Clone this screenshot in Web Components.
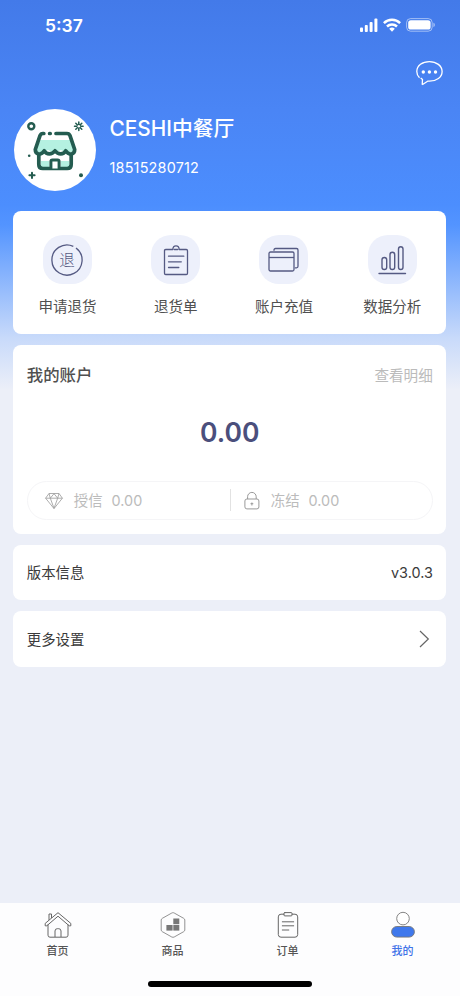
<!DOCTYPE html>
<html lang="zh-CN">
<head>
<meta charset="utf-8">
<meta name="viewport" content="width=device-width, initial-scale=1">
<title>我的</title>
<style>
  body {
    margin: 0;
    font-family: Inter, "Noto Sans CJK SC", sans-serif;
    color: #3a3a3a;
    background: #eceff8;
  }
</style>
</head>
<body>
<mine-page>
  <status-bar slot="header" time="5:37"></status-bar>
  <user-header slot="header" name="CESHI中餐厅" phone="18515280712"></user-header>

  <panel-card>
    <action-grid>
      <action-item icon="refund" label="申请退货"></action-item>
      <action-item icon="clipboard" label="退货单"></action-item>
      <action-item icon="cards" label="账户充值"></action-item>
      <action-item icon="chart" label="数据分析"></action-item>
    </action-grid>
  </panel-card>
  <panel-card>
    <account-summary balance="0.00">
      <account-stat icon="gem" label="授信" value="0.00"></account-stat>
      <account-stat icon="lock" label="冻结" value="0.00"></account-stat>
    </account-summary>
  </panel-card>
  <panel-card>
    <setting-row label="版本信息">v3.0.3</setting-row>
  </panel-card>
  <panel-card>
    <setting-row label="更多设置"><line-icon name="arrow"></line-icon></setting-row>
  </panel-card>

  <tab-bar slot="footer">
    <tab-item icon="home" label="首页"></tab-item>
    <tab-item icon="goods" label="商品"></tab-item>
    <tab-item icon="order" label="订单"></tab-item>
    <tab-item icon="user" label="我的" active></tab-item>
  </tab-bar>
</mine-page>

<script>
// name: [width, height, markup]
const icons = {
  signal: [18, 14, `<g fill="#fff"><rect x="0" y="9.500" width="3" height="4.500" rx=".9"/><rect x="4.800" y="7" width="3" height="7" rx=".9"/><rect x="9.600" y="4" width="3" height="10" rx=".9"/><rect x="14.400" y=".5" width="3" height="13.500" rx=".9"/></g>`],
  wifi: [18, 14, `<g fill="none" stroke="#fff" stroke-width="2.500"><path d="M.9 5.100a11.600 11.600 0 0 1 16.200 0"/><path d="M4 8.500a7.200 7.200 0 0 1 10 0"/></g><path fill="#fff" d="M6.200 10.800a4.200 4.200 0 0 1 5.600 0L9 13.800z"/>`],
  battery: [29, 14, `<rect x=".6" y=".6" width="25.600" height="12.600" rx="4" fill="none" stroke="#fff" stroke-opacity=".5"/><rect x="2.200" y="2.200" width="22.400" height="9.400" rx="2.600" fill="#fff"/><path fill="#fff" fill-opacity=".5" d="M27.400 4.800c2 .7 2 3.600 0 4.300z"/>`],
  chat: [27, 27, `<path fill="none" stroke="#fff" stroke-width="1.300" stroke-linejoin="round" d="M6.200 24.700l.3-5.300-1.800-1.500M3.500 17.700C1.800 16.100.8 13.900.8 11.500.8 5.600 6.400 1.600 13.400 1.600S26.100 5.700 26.100 11.500 20.500 21.200 13.400 21.200h-1.800l-5.400 3.500"/><g fill="#fff"><circle cx="7.300" cy="12" r="1.700"/><circle cx="13.400" cy="12" r="1.700"/><circle cx="19.500" cy="12" r="1.700"/></g>`],
  shop: [82, 82, `<path fill="#b5f1e1" d="M26.500 31h29.500l4 11-7 2-6-3-7 3-6-3-6 3-7-2zM27 52h8v6h-8zM47 52h8v6h-8z"/>
    <g fill="none" stroke="#245c50" stroke-width="3.700" stroke-linecap="round" stroke-linejoin="round">
    <path d="M24.800 46v9.500q0 4 4 4h24.400q4 0 4-4V46"/>
    <path d="M29.800 24.500H29q-2.200 0-3 2.200L21.300 40.500c0 5 5.700 6.500 9 1.300 2.200 4 7.500 4 10.700 0 3.200 4 8.500 4 10.700 0 3.300 5.200 9 3.700 9-1.300L56 26.700q-.8-2.200-3-2.200H42M35.600 24.500h.6"/>
    <path fill="#fff" stroke-width="3" d="M36.900 59.500v-7q0-1.500 1.500-1.500h5.200q1.500 0 1.500 1.500v7"/>
    </g><g fill="none" stroke="#245c50"><circle cx="17.300" cy="17.300" r="3" stroke-width="2.400"/><path stroke-width="1.500" stroke-linecap="round" d="M64.800 13v8.600M60.500 17.300h8.600M61.800 14.300l6 6M67.800 14.300l-6 6"/><path stroke-width="2" stroke-linecap="round" d="M18 63.700v5.200M15.400 66.300h5.200"/></g>
    <circle cx="64.800" cy="17.300" r="1.300" fill="#fff"/><circle cx="15.200" cy="46.700" r="1.300" fill="#245c50"/><circle cx="67" cy="66.300" r="2" fill="#245c50"/>`],
  refund: [32, 32, `<path d="M25 3.900A15.100 15.100 0 1 1 22.300 2.300" stroke="#555a83" fill="none" stroke-width="1.300"/><text x="16" y="22" text-anchor="middle" font-size="15.500" font-weight="300" fill="#555a83">退</text>`],
  clipboard: [26, 32, `<g fill="none" stroke="#555a83" stroke-width="1.300" stroke-linejoin="round" stroke-linecap="round"><path d="M8.500 5.500H2.700q-1.200 0-1.200 1.200v22.600q0 1.200 1.200 1.200h20.600q1.200 0 1.200-1.200V6.700q0-1.200-1.200-1.200h-5.800M8.500 5.500h1.300c.2-4.800 6.200-4.800 6.400 0h1.300M11.300 5.500h3.400M5.500 12.200h15.300M5.500 17.800h12.800M5.500 23.500h10.300"/></g>`],
  cards: [31, 26, `<g fill="none" stroke="#555a83" stroke-width="1.300" stroke-linejoin="round"><path d="M6 3.800V3q0-1.500 1.500-1.500h21q1.500 0 1.500 1.500v16.300q0 1.500-1.500 1.500h-1.700"/><rect x="1" y="5" width="25" height="19" rx="1.500"/><path d="M1 10.500h25"/></g>`],
  chart: [28, 30, `<g fill="none" stroke="#555a83" stroke-width="1.400" stroke-linecap="round"><rect x="4" y="12.500" width="4.700" height="12" rx="2.350"/><rect x="12" y="7.300" width="4.700" height="17.200" rx="2.350"/><rect x="20.500" y="1.800" width="4.500" height="22.700" rx="2.250"/><path d="M1 28.500h26.500"/></g>`],
  gem: [18, 18, `<g fill="none" stroke="#999" stroke-width=".8" stroke-linejoin="round"><path d="M4 1.500h10l3.400 4.700L9 16.600.6 6.200zM.6 6.200h16.800M4 1.500l1.300 4.700L9 16.300l3.700-10.100L14 1.500M5.300 6.200L9 1.700l3.700 4.500"/></g>`],
  lock: [16, 18, `<g fill="none" stroke="#999" stroke-width="1"><rect x=".9" y="7" width="14" height="9.900" rx="2"/><path d="M3.600 7V4.700a4.300 4.300 0 0 1 8.600 0V7M7.900 10.500v3M6.500 11.700h2.800"/></g>`],
  arrow: [12, 18, `<path d="M2 1l8.300 8L2 17" fill="none" stroke="#666" stroke-width="1.200"/>`],
  home: [28, 28, `<g fill="none" stroke="#666" stroke-width="1" stroke-linejoin="round"><path d="M4 13.500v10.700q0 2 2 2h16q2 0 2-2V13.500"/><path d="M1.200 12.400L14 1.700l12.800 10.700v2.400h-1.600L14 5.200 2.800 14.800H1.200zM5 9V3h2.500v4"/><path d="M11 26v-6q0-2.300 2.300-2.300h1.400q2.300 0 2.300 2.300v6"/></g>`],
  goods: [26, 28, `<path d="M13 1.700q.7 0 1.200.3l9.600 5.400q1 .6 1 1.600v10q0 1-1 1.600L14.200 26q-1.200.6-2.400 0L2.200 20.600q-1-.6-1-1.600V9q0-1 1-1.600L11.800 2q.5-.3 1.200-.3z" fill="none" stroke="#777" stroke-width=".8"/><g fill="#777"><rect x="13.300" y="7.500" width="6" height="5.700"/><rect x="6.400" y="14" width="6.200" height="5.600"/><rect x="13.300" y="14" width="6" height="5.600"/></g>`],
  order: [22, 28, `<g fill="none" stroke="#666" stroke-width="1" stroke-linecap="round"><path d="M7 3.200H4q-2.700 0-2.700 2.700v17.600q0 2.700 2.700 2.700h14q2.700 0 2.700-2.700V5.900q0-2.700-2.700-2.700h-3"/><rect x="6.900" y="1.600" width="8.200" height="3.300" rx="1"/><path d="M5.300 10.800h11.400M5.300 14.800h11.400M5.300 19h6.500"/></g>`],
  user: [26, 28, `<g stroke="#777" stroke-width=".9"><circle cx="13" cy="7.600" r="6.300" fill="#fff"/><rect x="1.600" y="15.500" width="22.800" height="10.600" rx="5.300" fill="#3f78ec"/></g>`],
};

class LineIcon extends HTMLElement {
  constructor() {
    super();
    this.attachShadow({ mode: "open" });
  }

  connectedCallback() {
    const [w, h, body] = icons[this.getAttribute("name")];
    this.shadowRoot.innerHTML = `
      <style>
        :host { display: inline-block; flex: none; }
        svg { display: block; overflow: visible; }
      </style>
      <svg width="${w}" height="${h}" viewBox="0 0 ${w} ${h}">${body}</svg>`;
  }
}

class MinePage extends HTMLElement {
  constructor() {
    super();
    this.attachShadow({ mode: "open" }).innerHTML = `
      <style>
        :host {
          display: flex;
          flex-direction: column;
          height: 996px;
          background: linear-gradient(#437ae9 0, #4a85f5 110px, #4c8efe 205px, #5394ff 225px, #c8dafa 338px, #eceff8 390px);
        }
        main {
          flex: 1;
          display: flex;
          flex-direction: column;
          gap: 11px;
          padding: 0 13.700px 0 13.300px;
        }
      </style>
      <slot name="header"></slot>
      <main><slot></slot></main>
      <slot name="footer"></slot>`;
  }
}

class StatusBar extends HTMLElement {
  constructor() {
    super();
    this.attachShadow({ mode: "open" });
  }

  connectedCallback() {
    this.shadowRoot.innerHTML = `
      <style>
        :host {
          display: flex;
          align-items: center;
          justify-content: space-between;
          height: 51px;
          padding: 0 24px 0 45px;
          box-sizing: border-box;
          color: #fff;
          font-size: 17.500px;
          font-weight: 600;
        }
        div { display: flex; gap: 5px; margin: -1px 1px 0 0; }
      </style>
      <span>${this.getAttribute("time")}</span>
      <div>
        <line-icon name="signal"></line-icon>
        <line-icon name="wifi"></line-icon>
        <line-icon name="battery"></line-icon>
      </div>`;
  }
}

class UserHeader extends HTMLElement {
  constructor() {
    super();
    this.attachShadow({ mode: "open" });
  }

  connectedCallback() {
    this.shadowRoot.innerHTML = `
      <style>
        :host { display: block; height: 160px; color: #fff; }
        .tools {
          display: flex;
          justify-content: flex-end;
          height: 49px;
          padding: 9px 17.500px 0 0;
          box-sizing: border-box;
        }
        .user {
          display: flex;
          gap: 14px;
          padding: 9px 13.500px 0;
        }
        .avatar {
          width: 82px;
          height: 82px;
          border-radius: 50%;
          background: #fff;
        }
        h1 {
          margin: 6px 0 0;
          font-size: 20.800px;
          font-weight: 500;
          line-height: 28px;
        }
        p {
          margin: 15px 0 0;
          font-size: 14.400px;
          line-height: 20px;
          letter-spacing: .2px;
        }
      </style>
      <div class="tools"><line-icon name="chat"></line-icon></div>
      <div class="user">
        <div class="avatar"><line-icon name="shop"></line-icon></div>
        <div>
          <h1>${this.getAttribute("name")}</h1>
          <p>${this.getAttribute("phone")}</p>
        </div>
      </div>`;
  }
}

class PanelCard extends HTMLElement {
  constructor() {
    super();
    this.attachShadow({ mode: "open" }).innerHTML = `
      <style>
        :host { display: block; border-radius: 8px; background: #fff; }
      </style>
      <slot></slot>`;
  }
}

class ActionGrid extends HTMLElement {
  constructor() {
    super();
    this.attachShadow({ mode: "open" }).innerHTML = `
      <style>
        :host {
          display: grid;
          grid-template-columns: repeat(4, 1fr);
          height: 122.500px;
        }
      </style>
      <slot></slot>`;
  }
}

class ActionItem extends HTMLElement {
  constructor() {
    super();
    this.attachShadow({ mode: "open" });
  }

  connectedCallback() {
    this.shadowRoot.innerHTML = `
      <style>
        :host {
          display: flex;
          flex-direction: column;
          align-items: center;
          padding-top: 24px;
        }
        div {
          display: flex;
          align-items: center;
          justify-content: center;
          width: 49px;
          height: 49px;
          border-radius: 20px;
          background: #edf0fb;
        }
        span { margin-top: 13px; font-size: 14.500px; line-height: 20px; color: #505050; }
      </style>
      <div><line-icon name="${this.getAttribute("icon")}"></line-icon></div>
      <span>${this.getAttribute("label")}</span>`;
  }
}

class AccountSummary extends HTMLElement {
  constructor() {
    super();
    this.attachShadow({ mode: "open" });
  }

  connectedCallback() {
    this.shadowRoot.innerHTML = `
      <style>
        :host {
          display: block;
          height: 189px;
          padding: 17px 13.500px 0;
          box-sizing: border-box;
        }
        header {
          display: flex;
          align-items: center;
          justify-content: space-between;
          height: 26px;
        }
        h2 { margin: -2px 0 0; font-size: 16.400px; font-weight: 500; color: #505050; }
        a { font-size: 14.600px; color: #bbb; }
        strong {
          display: block;
          margin-top: 26px;
          text-align: center;
          font-size: 26.500px;
          font-weight: 600;
          line-height: 36px;
          color: #4b4f7c;
        }
        .stats {
          display: grid;
          grid-template-columns: 1fr 1fr;
          align-items: center;
          height: 39px;
          margin-top: 31px;
          border: 1px solid #f5f5f7;
          border-radius: 20px;
          box-sizing: border-box;
        }
      </style>
      <header><h2>我的账户</h2><a>查看明细</a></header>
      <strong>${this.getAttribute("balance")}</strong>
      <div class="stats"><slot></slot></div>`;
  }
}

class AccountStat extends HTMLElement {
  constructor() {
    super();
    this.attachShadow({ mode: "open" });
  }

  connectedCallback() {
    this.shadowRoot.innerHTML = `
      <style>
        :host {
          display: flex;
          align-items: center;
          height: 22px;
          padding-left: 17.500px;
          font-size: 14.400px;
          line-height: 22px;
          color: #bbb;
        }
        :host(:last-child) { padding-left: 13.500px; border-left: 1px solid #e2e2e2; }
        line-icon { margin-top: 2px; }
        div { padding-top: 2px; }
        span { margin: 0 9px 0 10.500px; }
      </style>
      <line-icon name="${this.getAttribute("icon")}"></line-icon>
      <div><span>${this.getAttribute("label")}</span>${this.getAttribute("value")}</div>`;
  }
}

class SettingRow extends HTMLElement {
  constructor() {
    super();
    this.attachShadow({ mode: "open" });
  }

  connectedCallback() {
    this.shadowRoot.innerHTML = `
      <style>
        :host {
          display: flex;
          align-items: center;
          justify-content: space-between;
          height: 55.500px;
          padding: 1px 13.500px 0;
          box-sizing: border-box;
          font-size: 14.400px;
          line-height: 20px;
        }
        span { margin-top: 1px; }
        ::slotted(line-icon) { margin-right: 3px; }
      </style>
      <span>${this.getAttribute("label")}</span>
      <slot></slot>`;
  }
}

class TabBar extends HTMLElement {
  constructor() {
    super();
    this.attachShadow({ mode: "open" }).innerHTML = `
      <style>
        :host {
          display: flex;
          flex-direction: column;
          align-items: center;
          justify-content: space-between;
          height: 93px;
          padding-bottom: 9px;
          box-sizing: border-box;
          background: #fdfdfe;
        }
        nav { display: grid; grid-template-columns: repeat(4, 1fr); width: 100%; }
        i { width: 164px; height: 6px; border-radius: 3px; background: #000; }
      </style>
      <nav><slot></slot></nav>
      <i></i>`;
  }
}

class TabItem extends HTMLElement {
  constructor() {
    super();
    this.attachShadow({ mode: "open" });
  }

  connectedCallback() {
    this.shadowRoot.innerHTML = `
      <style>
        :host {
          display: flex;
          flex-direction: column;
          align-items: center;
          padding-top: 7.500px;
          font-size: 11px;
          font-weight: 500;
          line-height: 16px;
          color: #555;
        }
        :host([active]) { color: #3f73e8; }
        span { margin-top: 4.500px; }
      </style>
      <line-icon name="${this.getAttribute("icon")}"></line-icon>
      <span>${this.getAttribute("label")}</span>`;
  }
}

customElements.define("line-icon", LineIcon);
customElements.define("mine-page", MinePage);
customElements.define("status-bar", StatusBar);
customElements.define("user-header", UserHeader);
customElements.define("panel-card", PanelCard);
customElements.define("action-grid", ActionGrid);
customElements.define("action-item", ActionItem);
customElements.define("account-summary", AccountSummary);
customElements.define("account-stat", AccountStat);
customElements.define("setting-row", SettingRow);
customElements.define("tab-bar", TabBar);
customElements.define("tab-item", TabItem);
</script>
</body>
</html>
